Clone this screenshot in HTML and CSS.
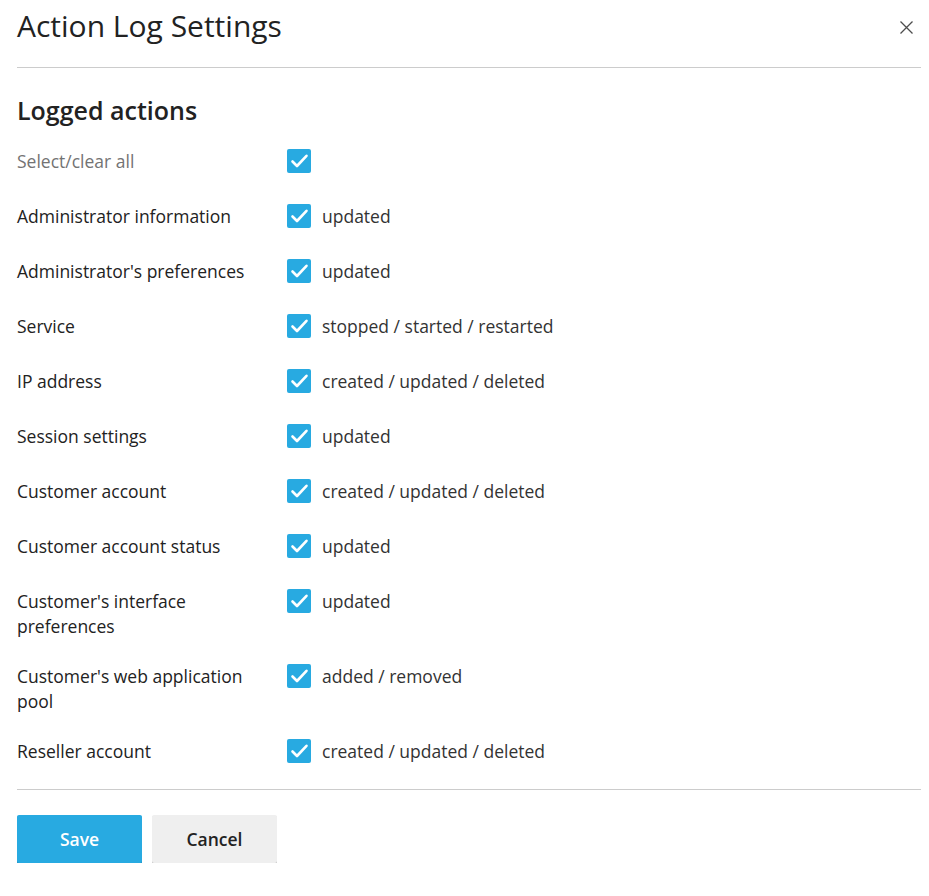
FILE: index.html
```html
<!DOCTYPE html>
<html lang="en">
<head>
<meta charset="utf-8">
<title>Action Log Settings</title>
<link rel="stylesheet" href="styles.css">
</head>
<body>
<div class="dialog">
  <div class="dialog-header">
    <h1 class="dialog-title">Action Log Settings</h1>
    <button class="close-btn" type="button" aria-label="Close">
      <svg width="13" height="13" viewBox="0 0 13 13"><path d="M0.5 0.5 L12.5 12.5 M12.5 0.5 L0.5 12.5" stroke="#4d4d4d" stroke-width="1.3" fill="none"/></svg>
    </button>
  </div>
  <h2 class="section-title">Logged actions</h2>
  <div class="rows">
    <div class="row">
      <div class="label muted">Select/clear all</div>
      <div class="field"><span class="cb"><svg width="24" height="24" viewBox="0 0 24 24"><path d="M5.5 12.5 L10 17 L19.5 6.8" stroke="#fff" stroke-width="2.6" fill="none" stroke-linecap="round" stroke-linejoin="round"/></svg></span></div>
    </div>
    <div class="row">
      <div class="label">Administrator information</div>
      <div class="field"><span class="cb"><svg width="24" height="24" viewBox="0 0 24 24"><path d="M5.5 12.5 L10 17 L19.5 6.8" stroke="#fff" stroke-width="2.6" fill="none" stroke-linecap="round" stroke-linejoin="round"/></svg></span><span class="value">updated</span></div>
    </div>
    <div class="row">
      <div class="label">Administrator's preferences</div>
      <div class="field"><span class="cb"><svg width="24" height="24" viewBox="0 0 24 24"><path d="M5.5 12.5 L10 17 L19.5 6.8" stroke="#fff" stroke-width="2.6" fill="none" stroke-linecap="round" stroke-linejoin="round"/></svg></span><span class="value">updated</span></div>
    </div>
    <div class="row">
      <div class="label">Service</div>
      <div class="field"><span class="cb"><svg width="24" height="24" viewBox="0 0 24 24"><path d="M5.5 12.5 L10 17 L19.5 6.8" stroke="#fff" stroke-width="2.6" fill="none" stroke-linecap="round" stroke-linejoin="round"/></svg></span><span class="value">stopped / started / restarted</span></div>
    </div>
    <div class="row">
      <div class="label">IP address</div>
      <div class="field"><span class="cb"><svg width="24" height="24" viewBox="0 0 24 24"><path d="M5.5 12.5 L10 17 L19.5 6.8" stroke="#fff" stroke-width="2.6" fill="none" stroke-linecap="round" stroke-linejoin="round"/></svg></span><span class="value">created / updated / deleted</span></div>
    </div>
    <div class="row">
      <div class="label">Session settings</div>
      <div class="field"><span class="cb"><svg width="24" height="24" viewBox="0 0 24 24"><path d="M5.5 12.5 L10 17 L19.5 6.8" stroke="#fff" stroke-width="2.6" fill="none" stroke-linecap="round" stroke-linejoin="round"/></svg></span><span class="value">updated</span></div>
    </div>
    <div class="row">
      <div class="label">Customer account</div>
      <div class="field"><span class="cb"><svg width="24" height="24" viewBox="0 0 24 24"><path d="M5.5 12.5 L10 17 L19.5 6.8" stroke="#fff" stroke-width="2.6" fill="none" stroke-linecap="round" stroke-linejoin="round"/></svg></span><span class="value">created / updated / deleted</span></div>
    </div>
    <div class="row">
      <div class="label">Customer account status</div>
      <div class="field"><span class="cb"><svg width="24" height="24" viewBox="0 0 24 24"><path d="M5.5 12.5 L10 17 L19.5 6.8" stroke="#fff" stroke-width="2.6" fill="none" stroke-linecap="round" stroke-linejoin="round"/></svg></span><span class="value">updated</span></div>
    </div>
    <div class="row">
      <div class="label">Customer's interface preferences</div>
      <div class="field"><span class="cb"><svg width="24" height="24" viewBox="0 0 24 24"><path d="M5.5 12.5 L10 17 L19.5 6.8" stroke="#fff" stroke-width="2.6" fill="none" stroke-linecap="round" stroke-linejoin="round"/></svg></span><span class="value">updated</span></div>
    </div>
    <div class="row">
      <div class="label">Customer's web application pool</div>
      <div class="field"><span class="cb"><svg width="24" height="24" viewBox="0 0 24 24"><path d="M5.5 12.5 L10 17 L19.5 6.8" stroke="#fff" stroke-width="2.6" fill="none" stroke-linecap="round" stroke-linejoin="round"/></svg></span><span class="value">added / removed</span></div>
    </div>
    <div class="row">
      <div class="label">Reseller account</div>
      <div class="field"><span class="cb"><svg width="24" height="24" viewBox="0 0 24 24"><path d="M5.5 12.5 L10 17 L19.5 6.8" stroke="#fff" stroke-width="2.6" fill="none" stroke-linecap="round" stroke-linejoin="round"/></svg></span><span class="value">created / updated / deleted</span></div>
    </div>
  </div>
  <div class="footer">
    <button class="btn btn-primary" type="button">Save</button>
    <button class="btn btn-default" type="button">Cancel</button>
  </div>
</div>
</body>
</html>
```

FILE: styles.css
```css
html, body {
  margin: 0;
  padding: 0;
  background: #fff;
}
body {
  font-family: "Open Sans", "Liberation Sans", sans-serif;
  color: #222;
}
.dialog {
  padding: 0 8px 0 17px;
}
.dialog-header {
  display: flex;
  justify-content: space-between;
  align-items: flex-start;
  padding: 9px 0 24px;
  border-bottom: 1px solid #ccc;
}
.dialog-title {
  margin: 0;
  font-size: 30px;
  line-height: 34px;
  font-weight: 400;
  color: #222;
}
.close-btn {
  margin: 12px 8px 0 0;
  padding: 0;
  border: 0;
  background: none;
  width: 13px;
  height: 13px;
  display: block;
  cursor: pointer;
}
.close-btn svg {
  display: block;
}
.section-title {
  margin: 27px 0 0;
  font-size: 25px;
  line-height: 30px;
  font-weight: 600;
  color: #222;
}
.rows {
  margin-top: 24px;
  display: flex;
  flex-direction: column;
  gap: 25px;
}
.row {
  display: flex;
  align-items: flex-start;
  min-height: 30px;
  font-size: 17.5px;
  line-height: 25px;
}
.label {
  width: 245px;
  margin-right: 25px;
  color: #222;
}
.label.muted {
  color: #737373;
}
.field {
  display: flex;
  align-items: flex-start;
}
.cb {
  width: 24px;
  height: 24px;
  border-radius: 2px;
  background: #28aae1;
  display: block;
  flex: none;
}
.cb svg {
  display: block;
}
.value {
  margin-left: 11px;
  color: #333;
}
.footer {
  margin-top: 20px;
  border-top: 1px solid #ccc;
  padding-top: 25px;
  display: flex;
  gap: 10px;
}
.btn {
  width: 125px;
  height: 48px;
  border: 0;
  border-radius: 2px;
  font-family: "Open Sans", "Liberation Sans", sans-serif;
  font-size: 17.5px;
  font-weight: 600;
  padding: 0;
  cursor: pointer;
}
.btn-primary {
  background: #28aae1;
  color: #fff;
  box-shadow: 0 1px 0 #1b88b8;
}
.btn-default {
  background: #efefef;
  color: #222;
  box-shadow: 0 1px 0 #bdbdbd;
}
```
